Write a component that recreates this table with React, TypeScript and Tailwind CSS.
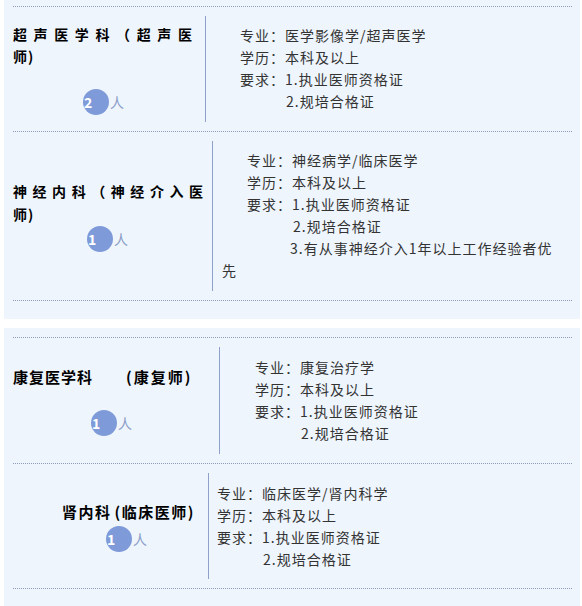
import React from "react";

type Row = {
  title: React.ReactNode;
  titleCls: string;
  leftW: string;
  gap: string;
  badgePl: string;
  count: string;
  rightCls: string;
  lines: React.ReactNode[];
};

const Badge = ({ count }: { count: string }) => (
  <div className="flex items-center">
    <div className="flex h-[26px] w-[26px] items-center rounded-full bg-[#7f9ad9] pl-[1px] text-[14px] leading-none font-bold text-white">
      {count}
    </div>
    <span className="ml-[1px] text-[14px] leading-none text-[#8c9dc8]">人</span>
  </div>
);

const JobRow = ({ row }: { row: Row }) => (
  <div className="flex border-t border-dotted border-[#8d9cbc] py-[9px]">
    <div className={`flex shrink-0 flex-col justify-center ${row.leftW}`}>
      <div className={row.titleCls}>{row.title}</div>
      <div className={`${row.gap} ${row.badgePl}`}>
        <Badge count={row.count} />
      </div>
    </div>
    <div className={`flex-1 border-l border-[#8fa1c8] text-[14px] leading-[22px] tracking-[1px] text-[#333] ${row.rightCls}`}>
      {row.lines.map((line, i) => (
        <div key={i}>{line}</div>
      ))}
    </div>
  </div>
);

const groupA: Row[] = [
  {
    title: (
      <>
        超声医学科（超声医<span className="tracking-[1px]">师)</span>
      </>
    ),
    titleCls: "pr-[8px] text-justify text-[14px] leading-[22px] font-bold tracking-[5px] text-black",
    leftW: "w-[192px]",
    gap: "mt-[22px]",
    badgePl: "pl-[70px]",
    count: "2",
    rightCls: "pt-[8px] pb-[10px] pl-[34px]",
    lines: [
      "专业：医学影像学/超声医学",
      "学历：本科及以上",
      "要求：1.执业医师资格证",
      <span className="pl-[46px]">2.规培合格证</span>,
    ],
  },
  {
    title: (
      <>
        神经内科（神经介入医<span className="tracking-[1px]">师)</span>
      </>
    ),
    titleCls: "pr-[4px] text-justify text-[14px] leading-[23px] font-bold tracking-[5px] text-black",
    leftW: "w-[199px]",
    gap: "mt-0",
    badgePl: "pl-[74px]",
    count: "1",
    rightCls: "pt-[8px] pb-[10px] pl-[9px]",
    lines: [
      <span className="pl-[25px]">专业：神经病学/临床医学</span>,
      <span className="pl-[25px]">学历：本科及以上</span>,
      <span className="pl-[25px]">要求：1.执业医师资格证</span>,
      <span className="pl-[71px]">2.规培合格证</span>,
      <span className="pl-[68px]">3.有从事神经介入1年以上工作经验者优</span>,
      "先",
    ],
  },
];

const groupB: Row[] = [
  {
    title: (
      <>
        康复医学科<span className="ml-[33px] tracking-[2px]">(康复师)</span>
      </>
    ),
    titleCls: "text-[15px] leading-[22px] font-bold tracking-[1px] text-black",
    leftW: "w-[206px]",
    gap: "mt-[22px]",
    badgePl: "pl-[78px]",
    count: "1",
    rightCls: "pt-[9px] pb-[10px] pl-[35px]",
    lines: [
      "专业：康复治疗学",
      "学历：本科及以上",
      "要求：1.执业医师资格证",
      <span className="pl-[46px]">2.规培合格证</span>,
    ],
  },
  {
    title: (
      <>
        肾内科<span className="ml-[3px]">(临床医师)</span>
      </>
    ),
    titleCls: "pl-[49px] text-[15px] leading-[22px] font-bold tracking-[1.5px] text-black",
    leftW: "w-[195px]",
    gap: "mt-[3px]",
    badgePl: "pl-[93px]",
    count: "1",
    rightCls: "pt-[9px] pb-[9px] pl-[8px]",
    lines: [
      "专业：临床医学/肾内科学",
      "学历：本科及以上",
      "要求：1.执业医师资格证",
      <span className="pl-[46px]">2.规培合格证</span>,
    ],
  },
];

const Panel = ({ rows, cls }: { rows: Row[]; cls: string }) => (
  <div className={`mx-[4px] w-[576px] bg-[#eef5fd] pr-[8px] pl-[9px] ${cls}`}>
    <div className="border-b border-dotted border-[#8d9cbc]">
      {rows.map((row, i) => (
        <JobRow key={i} row={row} />
      ))}
    </div>
  </div>
);

export default function App() {
  return (
    <div
      className="h-[606px] w-[582px] overflow-hidden bg-white"
      style={{ fontFamily: '"Noto Sans CJK SC", "Noto Sans", sans-serif' }}
    >
      <Panel rows={groupA} cls="pt-[6px] pb-[18px]" />
      <div className="h-[9px]" />
      <Panel rows={groupB} cls="pt-[9px] pb-[40px]" />
    </div>
  );
}
